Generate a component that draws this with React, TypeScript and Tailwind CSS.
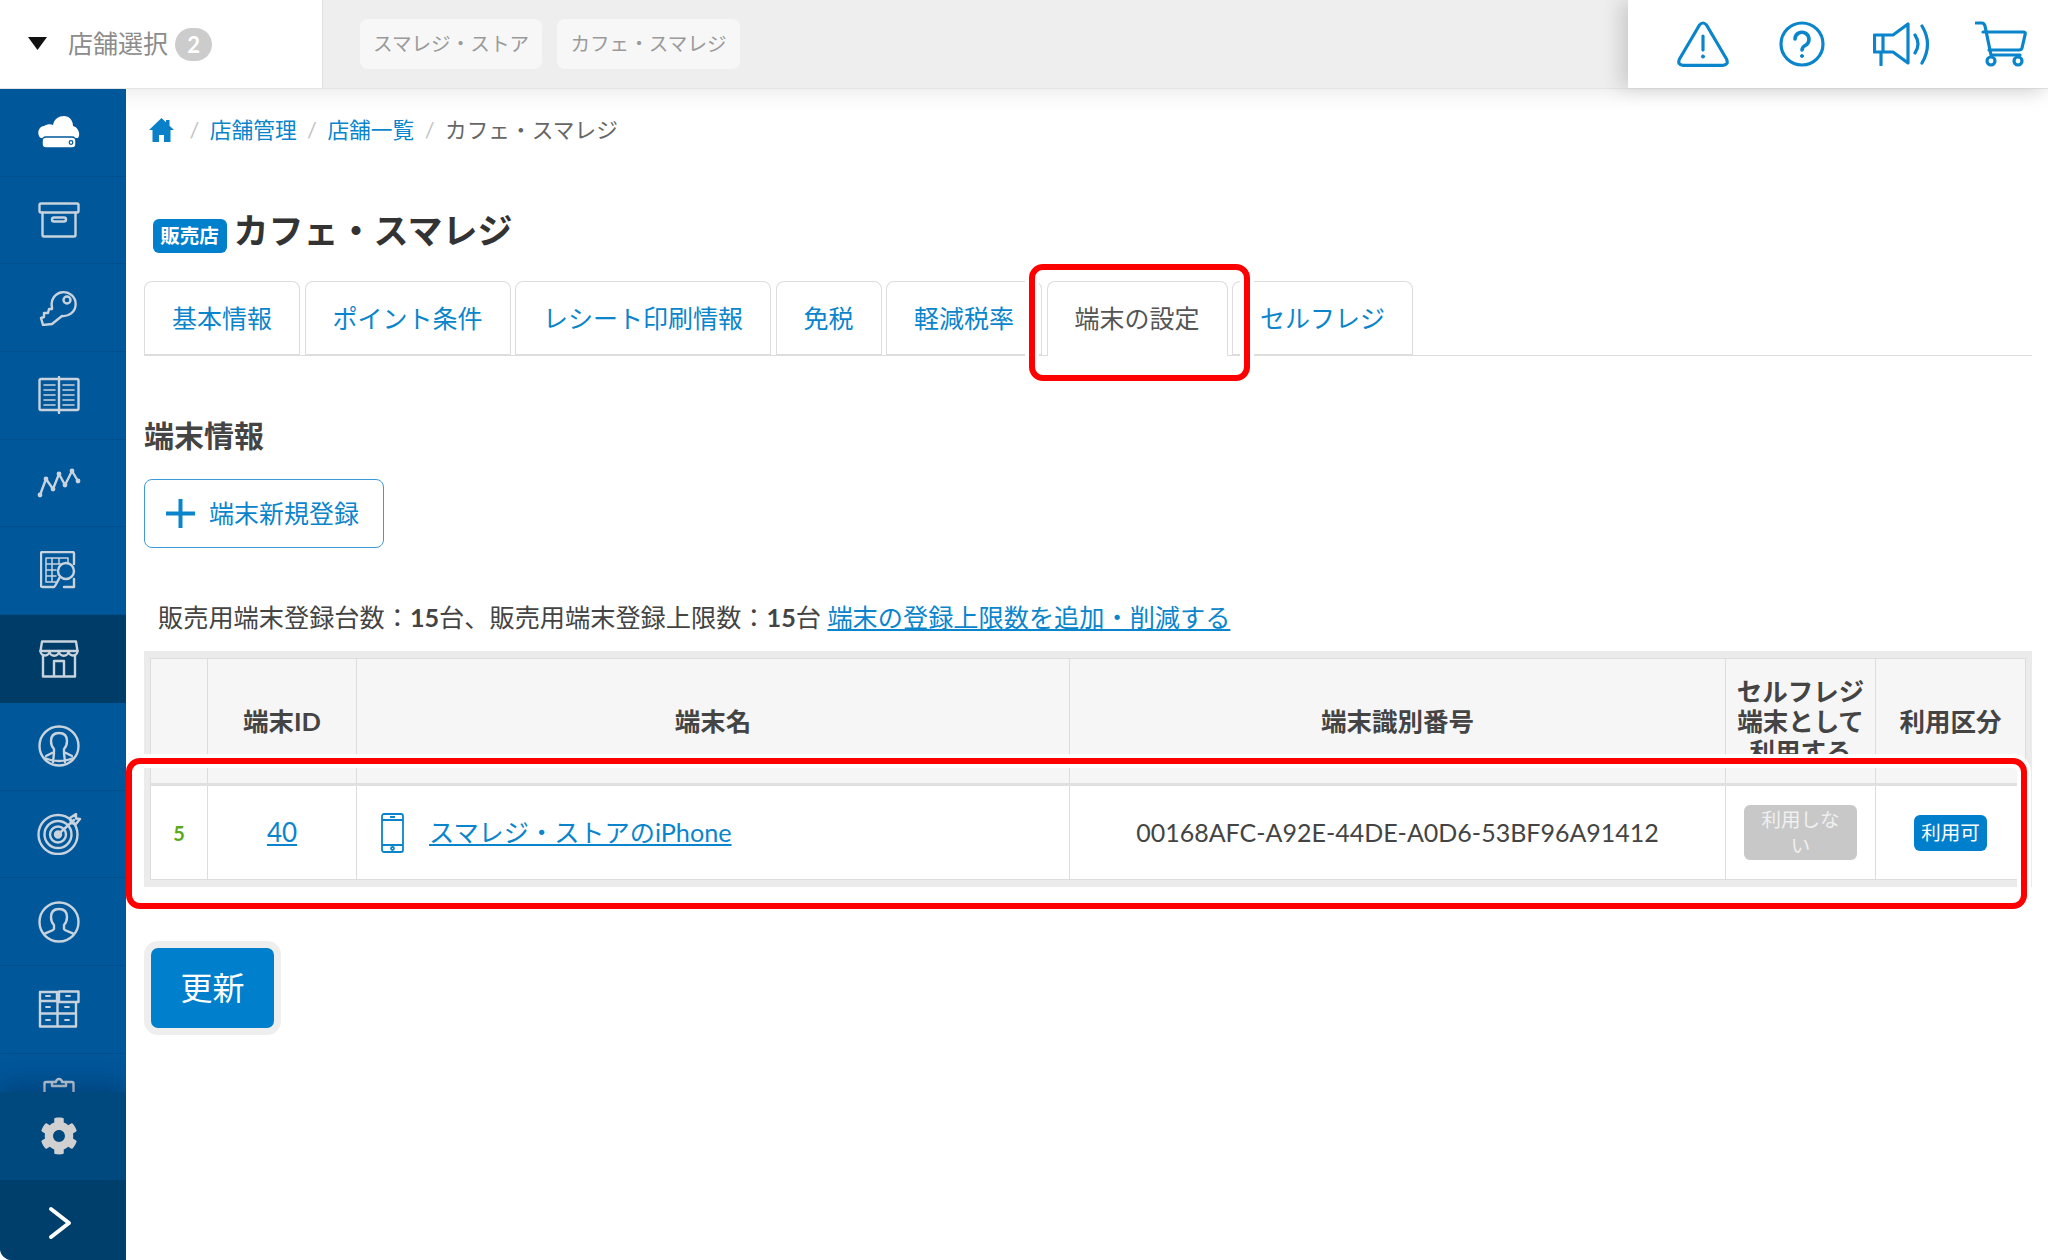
import type { ReactNode } from "react";
import { FaCog } from "react-icons/fa";

const tabs = ["基本情報", "ポイント条件", "レシート印刷情報", "免税", "軽減税率", "端末の設定", "セルフレジ"];

function SideIcon({ w, h, children }: { w: number; h: number; children: ReactNode }) {
    return (
        <svg width={w} height={h} viewBox={`0 0 ${w} ${h}`} fill="none" stroke="#c8d3dd" strokeWidth="2.4" strokeLinecap="round" strokeLinejoin="round">
            {children}
        </svg>
    );
}

const sideIcons: ReactNode[] = [
    <svg width="42" height="32" viewBox="0 0 42 32">
        <path fill="#fff" d="M3 22C-1 20-1 11 6 10c3-2 7-2 9-1C16 3 21 0 26 0c5 0 9 4 9 10 5 1 8 8 5 12z" />
        <rect x="4" y="21" width="34" height="11" rx="4" fill="#fff" stroke="#00579a" strokeWidth="1.5" />
        <circle cx="33" cy="26.500" r="1.800" fill="none" stroke="#00579a" strokeWidth="1.200" />
    </svg>,
    <SideIcon w={42} h={36}>
        <rect x="1.5" y="1.5" width="39" height="9" rx="1.5" />
        <path d="M4.5 10.5V33a1.5 1.5 0 0 0 1.5 1.5h30a1.5 1.5 0 0 0 1.5-1.5V10.5" />
        <rect x="14" y="15.5" width="14" height="4" rx="2" />
    </SideIcon>,
    <SideIcon w={40} h={36}>
        <path d="M13 17a12 12 0 1 1 10 9L13 34l-9 1-2-7 3-1v-4h4l1-4h3z" />
        <circle cx="28" cy="10" r="3.5" />
    </SideIcon>,
    <SideIcon w={42} h={38}>
        <path d="M21 3H3a1.5 1.5 0 0 0-1.5 1.5v28A1.5 1.5 0 0 0 3 34h36a1.5 1.5 0 0 0 1.5-1.5v-28A1.5 1.5 0 0 0 39 3H21zM21 1v36" />
        <path strokeWidth="1.6" d="M6 9h11M6 14h11M6 19h11M6 24h11M6 29h11M25 9h11M25 14h11M25 19h11M25 24h11M25 29h11" />
    </SideIcon>,
    <SideIcon w={44} h={30}>
        <path d="M3 27L9 11l7 10 6-15 6 11 7-14 6 10" />
        <g fill="#c8d3dd" stroke="none">
            <circle cx="3" cy="27" r="2.4" /><circle cx="9" cy="11" r="2.4" /><circle cx="16" cy="21" r="2.4" />
            <circle cx="22" cy="6" r="2.4" /><circle cx="28" cy="17" r="2.4" /><circle cx="35" cy="3" r="2.4" /><circle cx="41" cy="13" r="2.4" />
        </g>
    </SideIcon>,
    <SideIcon w={38} h={40}>
        <path d="M34 13V2.5A1.5 1.5 0 0 0 32.500 1H2.500A1.500 1.500 0 0 0 1 2.500v32A1.500 1.500 0 0 0 2.500 36H14M34 28v8H24" />
        <path strokeWidth="1.5" d="M6 7h22v6M6 7v24h10M6 13h16M6 19h10M6 25h10M12 7v24M19 7v6" />
        <circle cx="26" cy="20" r="8" />
        <path d="M20 26l-5 9" />
    </SideIcon>,
    <SideIcon w={40} h={38}>
        <path d="M3 1.500h34l1.500 9.500H1.500z" />
        <path d="M1.500 11a4.500 4.500 0 0 0 9 0 4.500 4.500 0 0 0 9.500 0 4.500 4.500 0 0 0 9.500 0 4.500 4.500 0 0 0 9 0" />
        <path d="M4 15v21.500h32V15M15 36.500V21h10v15.500" />
    </SideIcon>,
    <SideIcon w={42} h={42}>
        <circle cx="21" cy="21" r="19.500" />
        <path d="M21 8c-5 0-8 3-8 8 0 3 1 6 3 8v3l-8 4M21 8c5 0 8 3 8 8 0 3-1 6-3 8v3l8 4M6 33c5 2 10 3 15 3s10-1 15-3M15 37l1-9M27 37l-1-9" />
    </SideIcon>,
    <SideIcon w={46} h={42}>
        <circle cx="22" cy="21.500" r="19.500" />
        <circle cx="22" cy="21.500" r="13.500" />
        <circle cx="22" cy="21.500" r="8" />
        <circle cx="22" cy="21.500" r="3" fill="#c8d3dd" />
        <path d="M22 21.500L38 7M34 5l1 5 5 1 4-5-4-.5L40 1z" />
    </SideIcon>,
    <SideIcon w={42} h={42}>
        <circle cx="21" cy="21" r="19.500" />
        <path d="M6 33c3-2 9-3 10-5v-4c-2-2-3-5-3-8 0-5 3-8 8-8s8 3 8 8c0 3-1 6-3 8v4c1 2 7 3 10 5" />
    </SideIcon>,
    <SideIcon w={42} h={38}>
        <path d="M2 2h17v9H2zM2 11v25.500h17.500V11M21 1.500h19.500v10.500H38v24.500H19.500M21 1.500V12h17M2 23.500h36M19.500 12v24.500" />
        <path d="M8 6h4M28 6h4M8 17h4M27 17h4M8 30h4M27 30h4" strokeWidth="1.800" />
    </SideIcon>,
    <SideIcon w={32} h={40}>
        <path d="M9 5H3a1.500 1.500 0 0 0-1.500 1.500v32h29v-32A1.500 1.500 0 0 0 29 5h-6" />
        <path d="M9 9V5h4a3 3 0 0 1 6 0h4v4z" />
    </SideIcon>,
];

function Sidebar() {
    return (
        <aside className="relative z-20 flex w-[126px] shrink-0 flex-col overflow-hidden rounded-bl-[12px] bg-[#00579a]">
            <div className="h-[1003px] overflow-hidden">
                {sideIcons.map((icon, i) => (
                    <div
                        key={i}
                        className={i === 6
                            ? "flex h-[87.7px] items-center justify-center bg-[#003c68] pr-[8px]"
                            : "flex h-[87.7px] items-center justify-center border-b border-[#00508e] pr-[8px]"}
                    >
                        {icon}
                    </div>
                ))}
            </div>
            <div className="flex h-[88px] items-center justify-center bg-[#00497f] pr-[8px] text-[#d0d0d0] shadow-[0_-8px_24px_rgba(0,30,70,0.35)]">
                <FaCog size={38} />
            </div>
            <div className="flex h-[80px] items-center justify-center bg-[#003e6b] pt-[6px] pr-[6px]">
                <svg width="24" height="34" viewBox="0 0 24 34" fill="none" stroke="#fff" strokeWidth="4" strokeLinecap="round" strokeLinejoin="round">
                    <path d="M3 3l18 14L3 31" />
                </svg>
            </div>
        </aside>
    );
}

function Header() {
    return (
        <header className="relative z-10 flex h-[89px] shrink-0 border-b border-[#e4e4e4] bg-[#eeeeee] shadow-[0_2px_22px_rgba(0,0,0,0.1)]">
            <div className="flex w-[323px] items-center border-r border-[#e0e0e0] bg-white pl-[28px]">
                <svg width="19" height="13" viewBox="0 0 19 13" className="mb-[2px]"><path d="M0 0h19L9.500 13z" fill="#111" /></svg>
                <span className="ml-[21px] text-[25px] text-[#8c8c8c]">店舗選択</span>
                <span className="ml-[7px] flex h-[33px] w-[37px] items-center justify-center rounded-full bg-[#cccccc] text-[22px] font-bold text-white">2</span>
            </div>
            <div className="flex flex-1 items-center gap-[15px] pl-[37px]">
                <span className="flex h-[50px] w-[182px] items-center justify-center rounded-[8px] bg-[#f7f7f7] text-[19.600px] text-[#9a9a9a]">スマレジ・ストア</span>
                <span className="flex h-[50px] w-[183px] items-center justify-center rounded-[8px] bg-[#f7f7f7] text-[19.600px] text-[#9a9a9a]">カフェ・スマレジ</span>
            </div>
            <div className="flex w-[420px] items-center bg-white pl-[49px] shadow-[-8px_0_18px_rgba(0,0,0,0.14)]">
                <svg width="52" height="46" viewBox="0 0 52 46" fill="none" stroke="#0a85cc" strokeWidth="3.200" strokeLinecap="round" strokeLinejoin="round">
                    <path d="M22.500 4L2.500 38Q0 44 6 44.300H46Q52 44 49.500 38L29.500 4Q26 0 22.500 4Z" />
                    <path d="M26 15v14" />
                    <circle cx="26" cy="35.500" r="1.600" fill="#0a85cc" strokeWidth="1" />
                </svg>
                <svg width="46" height="46" viewBox="0 0 46 46" fill="none" stroke="#0a85cc" strokeWidth="3.200" strokeLinecap="round" strokeLinejoin="round" className="ml-[50px]">
                    <circle cx="23" cy="23" r="21" />
                    <path strokeWidth="3.600" d="M16 18a7 7 0 1 1 11 6q-4 2-4 5" />
                    <circle cx="23" cy="35" r="1.500" fill="#0a85cc" strokeWidth="1" />
                </svg>
                <svg width="58" height="44" viewBox="0 0 58 44" fill="none" stroke="#0a85cc" strokeWidth="3.200" strokeLinecap="round" strokeLinejoin="round" className="ml-[48px]">
                    <path d="M1.500 13H20L35 2V41L20 30H1.500ZM10 13V30M8 30V43" />
                    <path d="M42 13q6 9 0 18M49 4q11 18 0 37" />
                </svg>
                <svg width="52" height="46" viewBox="0 0 52 46" fill="none" stroke="#0a85cc" strokeWidth="3.200" strokeLinecap="round" strokeLinejoin="round" className="ml-[44px]">
                    <path d="M1 2H7Q9 2 10 5L16 34H45M8 11H48Q51 11 50 14L47 27Q46.500 29 44 29H14" />
                    <circle cx="16" cy="40" r="4" />
                    <circle cx="43" cy="40" r="4" />
                </svg>
            </div>
        </header>
    );
}

function Breadcrumb() {
    const sep = <span className="mx-[10.500px] text-[#c4c4c4]">/</span>;
    return (
        <nav className="ml-[5px] flex h-[30px] items-center text-[21.700px] text-[#0a85cc]">
            <svg width="25" height="24" viewBox="0 0 25 24" fill="#0a80c8"><path d="M12.500 0L0 12h3.500v12h6.500v-7h5v7h6.500V12H25L20.500 7.700V2h-3.500v2.300z" /></svg>
            <span className="ml-[5px]">{sep}</span>
            <span>店舗管理</span>
            {sep}
            <span>店舗一覧</span>
            {sep}
            <span className="text-[#666]">カフェ・スマレジ</span>
        </nav>
    );
}

function Tabs() {
    return (
        <div className="mt-[28px] flex h-[75px] gap-[4.500px] border-b border-[#dddddd]">
            {tabs.map((tab) => (
                <div
                    key={tab}
                    className={tab === "端末の設定"
                        ? "flex h-[75px] items-center rounded-t-[8px] border border-b-0 border-[#dddddd] bg-white px-[27px] text-[25px] text-[#555]"
                        : "flex h-[75px] items-center rounded-t-[8px] border border-b-2 border-[#dddddd] bg-white px-[27px] pt-[2px] text-[25px] text-[#0a85cc]"}
                >
                    {tab}
                </div>
            ))}
        </div>
    );
}

function DeviceTable() {
    const th = "border border-[#dddddd] bg-[#f6f6f6] p-0 text-[25.500px] leading-[30px] font-bold text-[#444]";
    const td = "border border-[#dddddd] bg-white p-0 text-center";
    return (
        <div className="mt-[16px] border-x-[6px] border-y-[7px] border-[#ebebeb]">
            <table className="w-full table-fixed border-collapse">
                <colgroup>
                    <col className="w-[57px]" />
                    <col className="w-[149px]" />
                    <col className="w-[713px]" />
                    <col className="w-[656px]" />
                    <col className="w-[150px]" />
                    <col className="w-[150px]" />
                </colgroup>
                <thead>
                    <tr className="h-[126px] border-b-[3px] border-[#e0e0e0]">
                        <th className={th}></th>
                        <th className={th}>端末ID</th>
                        <th className={th}>端末名</th>
                        <th className={th}>端末識別番号</th>
                        <th className={th}>セルフレジ<br />端末として<br />利用する</th>
                        <th className={th}>利用区分</th>
                    </tr>
                </thead>
                <tbody>
                    <tr className="h-[95px]">
                        <td className={`${td} text-[20px] font-bold text-[#5aaa20]`}>5</td>
                        <td className={td}><a className="text-[26px] text-[#0a85cc] underline">40</a></td>
                        <td className={td}>
                            <div className="flex items-center pl-[24px]">
                                <svg width="23" height="40" viewBox="0 0 23 40" fill="none" stroke="#0a85cc" strokeWidth="1.800">
                                    <rect x="1" y="1" width="21" height="38" rx="2" />
                                    <path d="M1 7h21M1 32h21M9 4h5" />
                                    <circle cx="11.500" cy="35.500" r="1.500" />
                                </svg>
                                <a className="ml-[25px] text-[25.200px] text-[#0a85cc] underline">スマレジ・ストアのiPhone</a>
                            </div>
                        </td>
                        <td className={`${td} text-[25px] text-[#444]`}>00168AFC-A92E-44DE-A0D6-53BF96A91412</td>
                        <td className={td}>
                            <span className="mx-auto block h-[55px] w-[113px] rounded-[6px] bg-[#c8c8c8] px-[12px] pt-[2px] text-[19.500px] leading-[26px] text-[#f0f0f0]">利用しない</span>
                        </td>
                        <td className={td}>
                            <span className="mx-auto flex h-[36px] w-[73px] items-center justify-center rounded-[6px] bg-[#0080cc] text-[19.500px] text-white">利用可</span>
                        </td>
                    </tr>
                </tbody>
            </table>
        </div>
    );
}

export default function App() {
    return (
        <div className="relative flex h-[1260px] w-[2048px] flex-col overflow-hidden bg-white font-['Lato','Noto_Sans_CJK_JP',sans-serif] text-[#444]">
            <Header />
            <div className="flex min-h-0 flex-1">
                <Sidebar />
                <main className="flex-1 pr-[16px] pl-[18px] pt-[26px]">
                    <Breadcrumb />
                    <div className="mt-[62px] ml-[8.500px] flex items-end gap-[7px]">
                        <span className="flex h-[34px] w-[74px] items-center justify-center rounded-[6px] bg-[#0080cc] text-[19.500px] font-bold text-white">販売店</span>
                        <h1 className="text-[35px] leading-[46px] font-bold text-[#333]">カフェ・スマレジ</h1>
                    </div>
                    <Tabs />
                    <h2 className="mt-[59px] text-[30px] leading-[40px] font-bold text-[#444]">端末情報</h2>
                    <button className="mt-[24px] flex h-[69px] w-[240px] items-center gap-[14px] rounded-[8px] border border-[#3d9ad9] bg-white pl-[21px] text-[25px] text-[#0a85cc]">
                        <svg width="29" height="29" viewBox="0 0 29 29" stroke="#0a85cc" strokeWidth="4"><path d="M14.500 0v29M0 14.500h29" /></svg>
                        端末新規登録
                    </button>
                    <p className="mt-[51px] ml-[14px] text-[25.200px] leading-[36px] text-[#444]">
                        販売用端末登録台数：<b>15</b>台、販売用端末登録上限数：<b>15</b>台 <a className="text-[#0a85cc] underline">端末の登録上限数を追加・削減する</a>
                    </p>
                    <DeviceTable />
                    <button className="mt-[54px] flex h-[94px] w-[137px] items-center justify-center rounded-[14px] border-[7px] border-[#eeeeee] bg-[#0080cc] text-[32px] text-white">
                        更新
                    </button>
                </main>
            </div>

            {/* red callouts */}
            <div className="absolute top-[264px] left-[1029px] h-[117px] w-[221px] rounded-[14px] border-[6px] border-[#ff0000] shadow-[0_0_0_4px_#fff,inset_0_0_0_4px_#fff]" />
            <div className="absolute top-[758px] left-[126px] h-[151px] w-[1901px] rounded-[14px] border-[6px] border-[#ff0000] shadow-[0_0_0_4px_#fff,inset_0_0_0_4px_#fff]" />
        </div>
    );
}
